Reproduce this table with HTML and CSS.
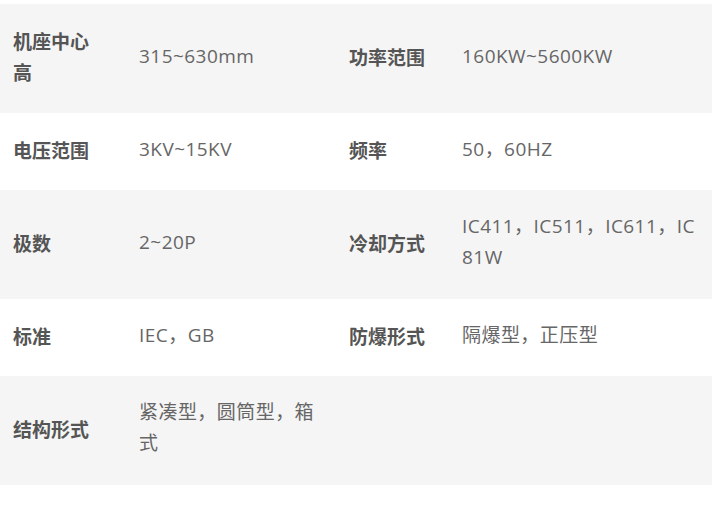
FILE: index.html
```html
<!DOCTYPE html>
<html lang="zh-CN">
<head>
<meta charset="utf-8">
<title>参数</title>
<link rel="stylesheet" href="styles.css">
</head>
<body>
<div class="specs">
  <div class="row shade">
    <div class="cell label c1">机座中心高</div>
    <div class="cell value c2">315~630mm</div>
    <div class="cell label c3">功率范围</div>
    <div class="cell value c4">160KW~5600KW</div>
  </div>
  <div class="row">
    <div class="cell label c1">电压范围</div>
    <div class="cell value c2">3KV~15KV</div>
    <div class="cell label c3">频率</div>
    <div class="cell value c4">50，60HZ</div>
  </div>
  <div class="row shade">
    <div class="cell label c1">极数</div>
    <div class="cell value c2">2~20P</div>
    <div class="cell label c3">冷却方式</div>
    <div class="cell value c4">IC411，IC511，IC611，IC81W</div>
  </div>
  <div class="row">
    <div class="cell label c1">标准</div>
    <div class="cell value c2">IEC，GB</div>
    <div class="cell label c3">防爆形式</div>
    <div class="cell value c4">隔爆型，正压型</div>
  </div>
  <div class="row shade">
    <div class="cell label c1">结构形式</div>
    <div class="cell value c2">紧凑型，圆筒型，箱式</div>
    <div class="cell label c3"></div>
    <div class="cell value c4"></div>
  </div>
</div>
</body>
</html>
```

FILE: styles.css
```css
html, body {
  margin: 0;
  padding: 0;
  background: #ffffff;
}

body {
  font-family: "Open Sans", "Noto Sans CJK SC", sans-serif;
  font-size: 19px;
  line-height: 31.33px;
  color: #666666;
}

.specs {
  margin-top: 4px;
  width: 712px;
}

.row {
  display: grid;
  grid-template-columns: 126px 210px 113px 263px;
  background: #ffffff;
}

.row.shade {
  background: #f5f5f5;
}

.cell {
  padding: 21px 20px 25px 13px;
  display: flex;
  align-items: center;
  word-break: break-all;
}

.cell.c4 {
  padding-right: 12px;
}

.label {
  font-family: "Noto Sans CJK SC", sans-serif;
  font-weight: 700;
  color: #555555;
}

.value {
  color: #666666;
  letter-spacing: 0.45px;
}
```
